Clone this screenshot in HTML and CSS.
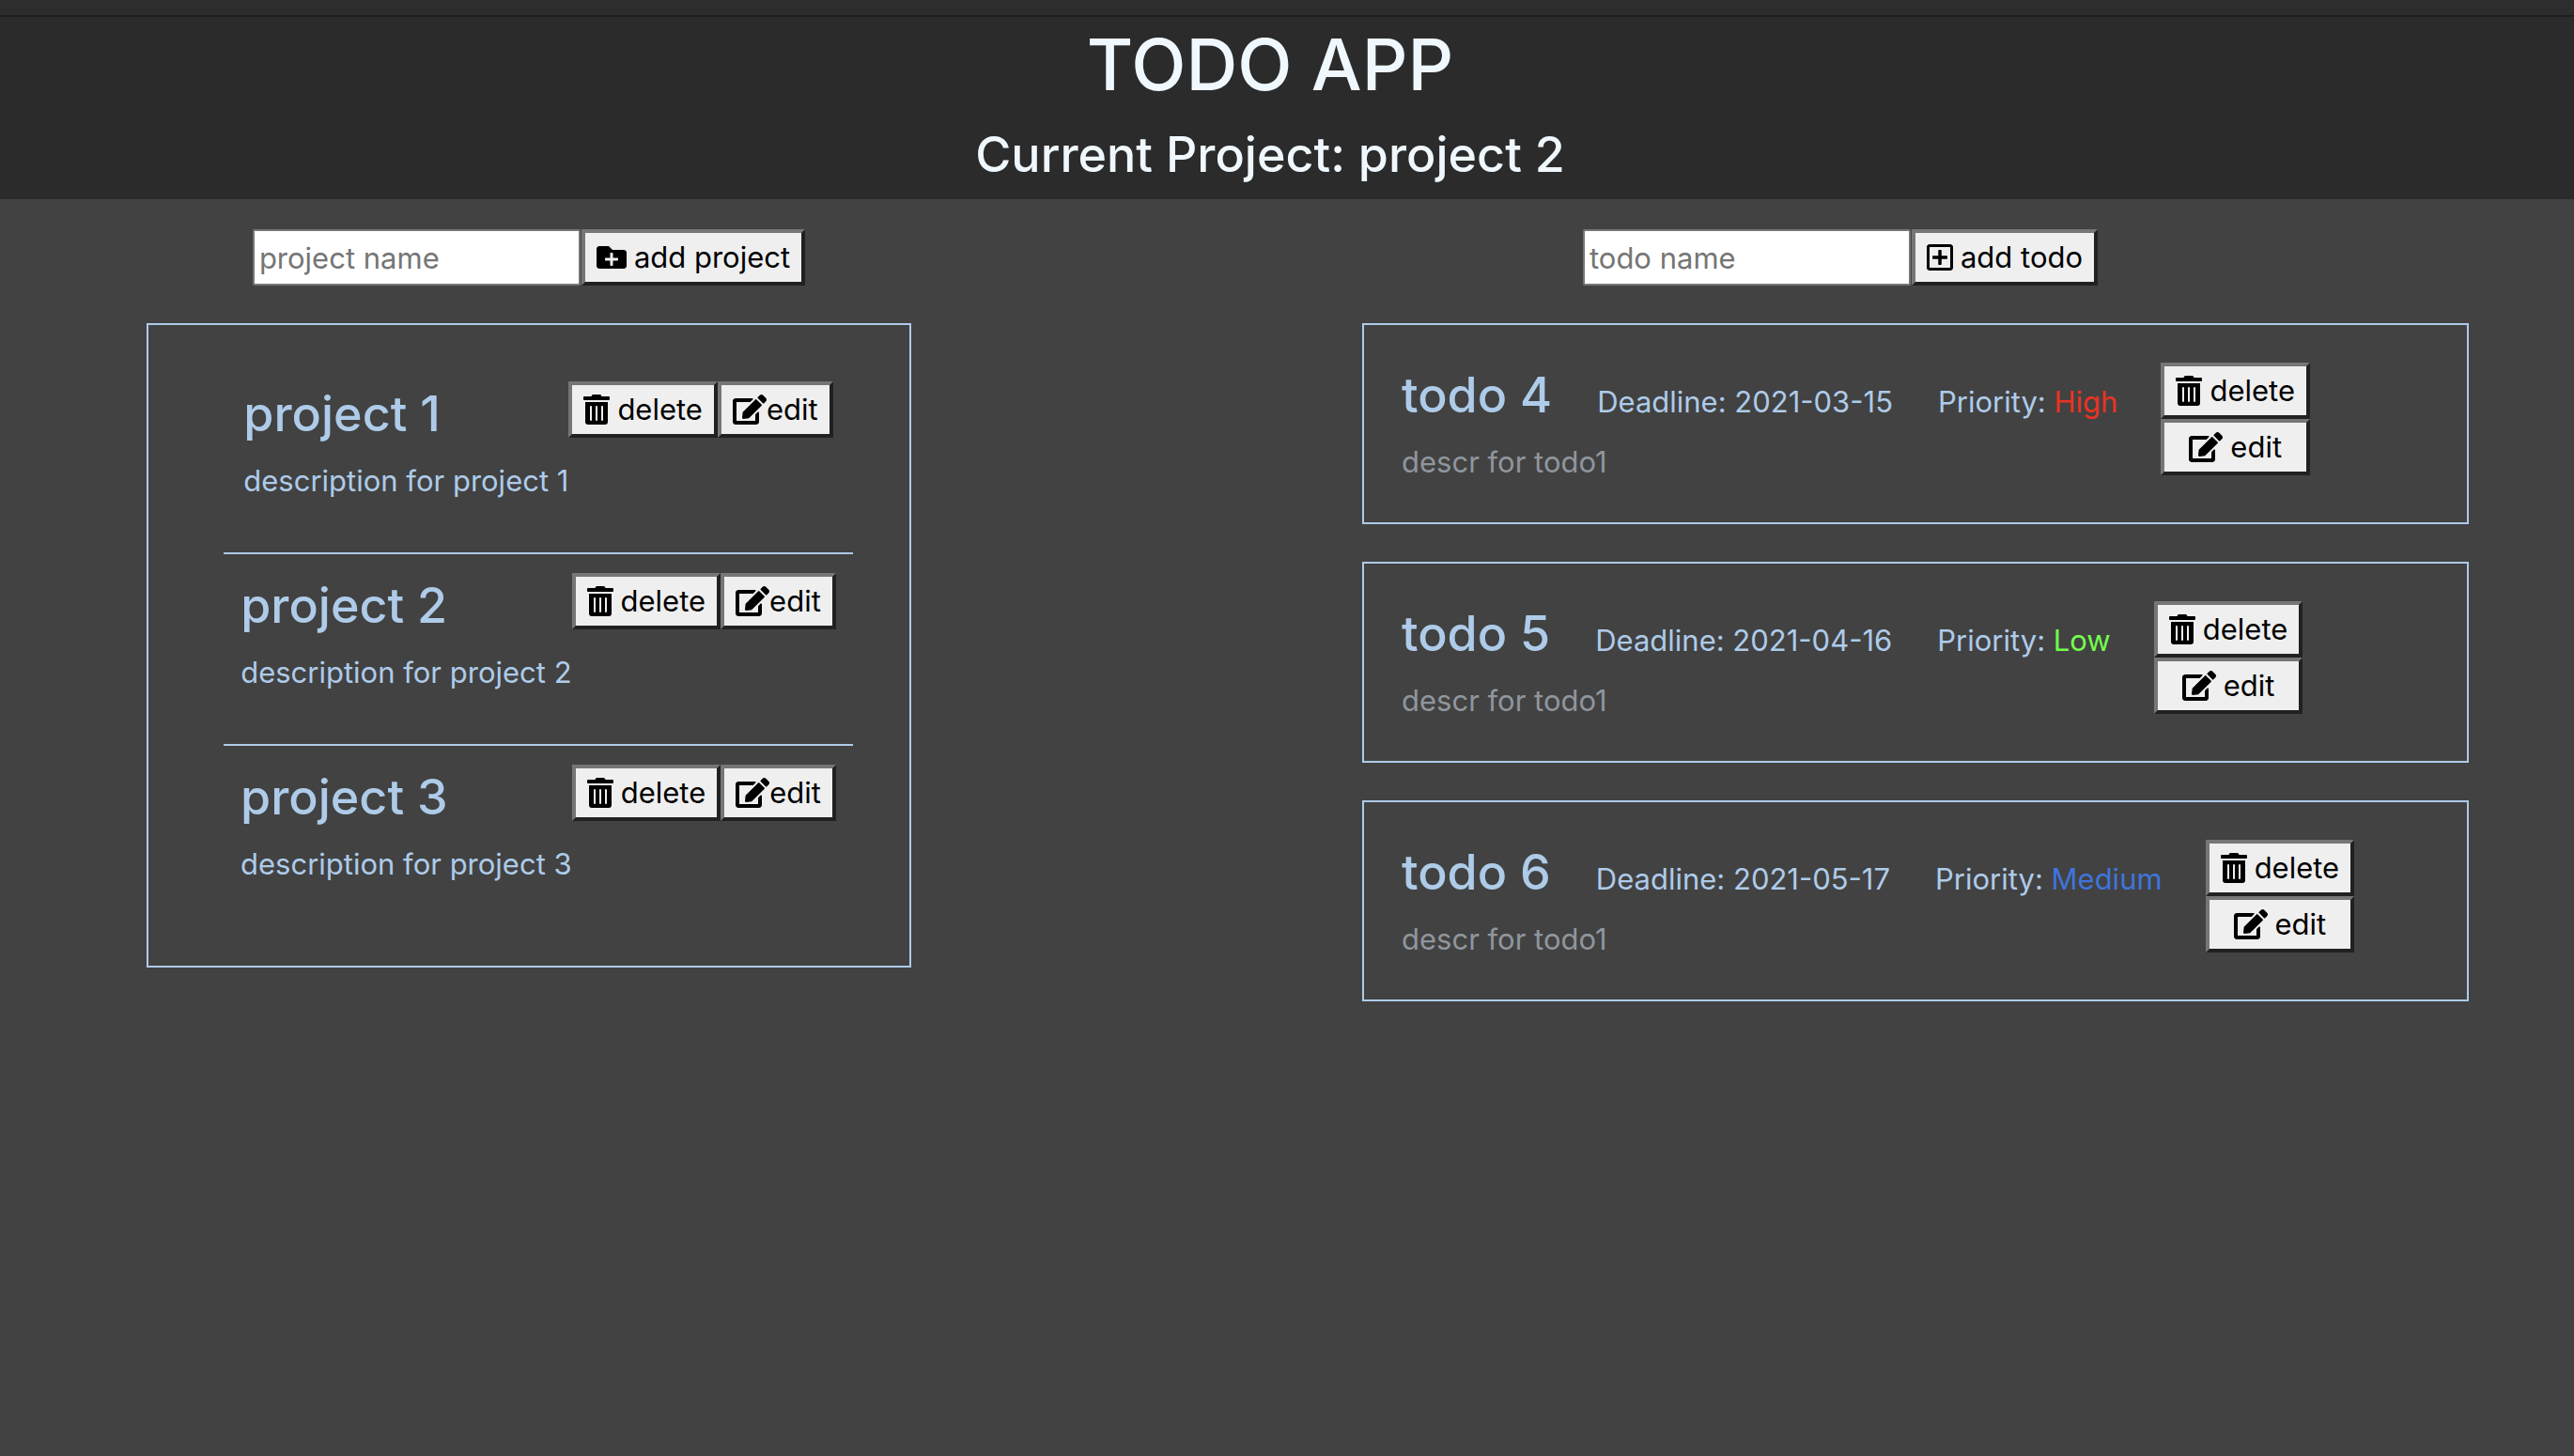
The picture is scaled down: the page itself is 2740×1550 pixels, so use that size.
FILE: index.html
```html
<!DOCTYPE html>
<html lang="en">
<head>
<meta charset="utf-8">
<title>Todo App</title>
<link rel="stylesheet" href="styles.css">
</head>
<body>
<svg class="sprite" aria-hidden="true">
  <symbol id="trash" viewBox="0 0 448 512"><path d="M32 464a48 48 0 0 0 48 48h288a48 48 0 0 0 48-48V128H32zm272-256a16 16 0 0 1 32 0v224a16 16 0 0 1-32 0zm-96 0a16 16 0 0 1 32 0v224a16 16 0 0 1-32 0zm-96 0a16 16 0 0 1 32 0v224a16 16 0 0 1-32 0zM432 32H312l-9.4-18.7A24 24 0 0 0 281.1 0H166.8a23.72 23.72 0 0 0-21.4 13.3L136 32H16A16 16 0 0 0 0 48v32a16 16 0 0 0 16 16h416a16 16 0 0 0 16-16V48a16 16 0 0 0-16-16z"/></symbol>
  <symbol id="edit" viewBox="0 0 576 512"><path d="M402.6 83.2l90.2 90.2c3.8 3.8 3.8 10 0 13.8L274.4 405.6l-92.8 10.3c-12.4 1.4-22.9-9.1-21.5-21.5l10.3-92.8L388.8 83.2c3.8-3.8 10-3.8 13.8 0zm162-22.9l-48.8-48.8c-15.2-15.2-39.9-15.2-55.2 0l-35.4 35.4c-3.8 3.8-3.8 10 0 13.8l90.2 90.2c3.8 3.8 10 3.8 13.8 0l35.4-35.4c15.2-15.3 15.2-40 0-55.2zM384 346.2V448H64V128h229.8c3.2 0 6.2-1.3 8.5-3.5l40-40c7.6-7.6 2.2-20.5-8.5-20.5H48C21.5 64 0 85.5 0 112v352c0 26.5 21.5 48 48 48h352c26.5 0 48-21.5 48-48V306.2c0-10.7-12.9-16-20.5-8.5l-40 40c-2.2 2.3-3.5 5.3-3.5 8.5z"/></symbol>
  <symbol id="folder-plus" viewBox="0 0 512 512"><path d="M464 128H272l-64-64H48C21.49 64 0 85.49 0 112v288c0 26.51 21.49 48 48 48h416c26.51 0 48-21.49 48-48V176c0-26.51-21.49-48-48-48zm-96 168c0 8.84-7.16 16-16 16h-72v72c0 8.84-7.16 16-16 16h-16c-8.84 0-16-7.16-16-16v-72h-72c-8.84 0-16-7.16-16-16v-16c0-8.84 7.16-16 16-16h72v-72c0-8.84 7.16-16 16-16h16c8.84 0 16 7.16 16 16v72h72c8.84 0 16 7.16 16 16v16z"/></symbol>
  <symbol id="plus-square" viewBox="0 0 448 512"><path d="M352 240v32c0 6.6-5.4 12-12 12h-88v88c0 6.6-5.4 12-12 12h-32c-6.6 0-12-5.4-12-12v-88h-88c-6.6 0-12-5.4-12-12v-32c0-6.6 5.4-12 12-12h88v-88c0-6.6 5.4-12 12-12h32c6.6 0 12 5.4 12 12v88h88c6.6 0 12 5.4 12 12zm96-160v352c0 26.5-21.5 48-48 48H48c-26.5 0-48-21.5-48-48V80c0-26.5 21.5-48 48-48h352c26.5 0 48 21.5 48 48zm-48 346V86c0-3.3-2.7-6-6-6H54c-3.3 0-6 2.7-6 6v340c0 3.3 2.7 6 6 6h340c3.3 0 6-2.7 6-6z"/></symbol>
</svg>
<div class="strip"></div>
<header class="header">
  <h1 class="app-title">TODO APP</h1>
  <h2 class="current">Current Project: project 2</h2>
</header>
<main class="columns">
  <section>
    <form class="add-form">
      <input class="field" type="text" placeholder="project name" aria-label="project name">
      <button class="btn" type="button"><svg class="icon icon-folder"><use href="#folder-plus"/></svg>add project</button>
    </form>
    <ul class="projects">
      <li class="project">
        <div><h3 class="name">project 1</h3><p class="descr">description for project 1</p></div>
        <div class="actions">
          <button class="btn" type="button"><svg class="icon"><use href="#trash"/></svg>delete</button>
          <button class="btn btn-tight" type="button"><svg class="icon icon-edit"><use href="#edit"/></svg>edit</button>
        </div>
      </li>
      <li class="project">
        <div><h3 class="name">project 2</h3><p class="descr">description for project 2</p></div>
        <div class="actions">
          <button class="btn" type="button"><svg class="icon"><use href="#trash"/></svg>delete</button>
          <button class="btn btn-tight" type="button"><svg class="icon icon-edit"><use href="#edit"/></svg>edit</button>
        </div>
      </li>
      <li class="project">
        <div><h3 class="name">project 3</h3><p class="descr">description for project 3</p></div>
        <div class="actions">
          <button class="btn" type="button"><svg class="icon"><use href="#trash"/></svg>delete</button>
          <button class="btn btn-tight" type="button"><svg class="icon icon-edit"><use href="#edit"/></svg>edit</button>
        </div>
      </li>
    </ul>
  </section>
  <section>
    <form class="add-form">
      <input class="field" type="text" placeholder="todo name" aria-label="todo name">
      <button class="btn" type="button"><svg class="icon"><use href="#plus-square"/></svg>add todo</button>
    </form>
    <ul class="todos">
      <li class="todo">
        <div>
          <div class="facts"><h3 class="name">todo 4</h3><span>Deadline: 2021-03-15</span><span>Priority: <span class="high">High</span></span></div>
          <p class="descr muted">descr for todo1</p>
        </div>
        <div class="actions stacked">
          <button class="btn" type="button"><svg class="icon"><use href="#trash"/></svg>delete</button>
          <button class="btn" type="button"><svg class="icon icon-edit"><use href="#edit"/></svg>edit</button>
        </div>
      </li>
      <li class="todo">
        <div>
          <div class="facts"><h3 class="name">todo 5</h3><span>Deadline: 2021-04-16</span><span>Priority: <span class="low">Low</span></span></div>
          <p class="descr muted">descr for todo1</p>
        </div>
        <div class="actions stacked">
          <button class="btn" type="button"><svg class="icon"><use href="#trash"/></svg>delete</button>
          <button class="btn" type="button"><svg class="icon icon-edit"><use href="#edit"/></svg>edit</button>
        </div>
      </li>
      <li class="todo">
        <div>
          <div class="facts"><h3 class="name">todo 6</h3><span>Deadline: 2021-05-17</span><span>Priority: <span class="medium">Medium</span></span></div>
          <p class="descr muted">descr for todo1</p>
        </div>
        <div class="actions stacked">
          <button class="btn" type="button"><svg class="icon"><use href="#trash"/></svg>delete</button>
          <button class="btn" type="button"><svg class="icon icon-edit"><use href="#edit"/></svg>edit</button>
        </div>
      </li>
    </ul>
  </section>
</main>
</body>
</html>
```
FILE: styles.css
```css
:root {
  --line: #aecbe9;
  --text: 31px;
  --title: 52px;
}
* { box-sizing: border-box; }
body {
  margin: 0;
  min-height: 100vh;
  background: #424242;
  color: var(--line);
  font-family: Inter, "Liberation Sans", sans-serif;
  font-size: var(--text);
  line-height: 48px;
}
h1, h2, h3, p, ul { margin: 0; padding: 0; }
ul { list-style: none; }
.sprite { display: none; }
.strip {
  height: 18px;
  background: #2d2d2d;
  border-bottom: 2px solid #1f1f1f;
}
.header {
  padding: 2px 36px 12px 0;
  background: #2b2b2b;
  color: #f0f8ff;
  text-align: center;
}
.app-title {
  margin-bottom: 14px;
  font-size: 76px;
  font-weight: 500;
  line-height: 96px;
}
.current {
  font-size: var(--title);
  font-weight: 500;
  line-height: 70px;
}
.columns {
  display: grid;
  grid-template-columns: 814fr 1338fr;
  gap: 320px;
  padding: 32px 112px 32px 156px;
}
.add-form {
  display: flex;
  justify-content: center;
  gap: 1px;
  margin-bottom: 40px;
}
.field {
  width: 349px;
  height: 60px;
  padding: 2px 5px;
  border: 2px solid #767676;
  border-radius: 2px;
  background: #fff;
  color: #000;
  font: inherit;
}
.field::placeholder { color: #757575; }
.btn {
  display: flex;
  align-items: center;
  justify-content: center;
  gap: 8px;
  height: 60px;
  padding: 2px 12px;
  border: 4px solid;
  border-color: #767676 #212121 #212121 #767676;
  background: #efefef;
  color: #000;
  font: inherit;
}
.btn-tight { gap: 0; }
.icon {
  width: 28px;
  height: 32px;
  flex: none;
}
.icon-folder { width: 32px; }
.icon-edit { width: 36px; }
.projects {
  padding: 40px 60px 32px 80px;
  border: 2px solid var(--line);
}
.project {
  display: flex;
  justify-content: center;
  padding: 20px 0;
}
.project + .project { border-top: 2px solid var(--line); }
.name {
  font-size: var(--title);
  font-weight: 500;
  line-height: 70px;
}
.descr {
  margin-top: 12px;
  white-space: nowrap;
}
.project .descr { margin-bottom: 32px; }
.actions {
  display: flex;
  align-items: flex-start;
}
.stacked {
  flex-direction: column;
  align-items: stretch;
}
.todos {
  display: grid;
  gap: 40px;
  padding-left: 160px;
}
.todo {
  display: flex;
  gap: 46px;
  padding: 40px;
  border: 2px solid var(--line);
}
.facts {
  display: flex;
  align-items: baseline;
  gap: 48px;
}
.muted { color: #8f969d; }
.high { color: #e93323; }
.low { color: #75fb4c; }
.medium { color: #3f74dc; }
```
